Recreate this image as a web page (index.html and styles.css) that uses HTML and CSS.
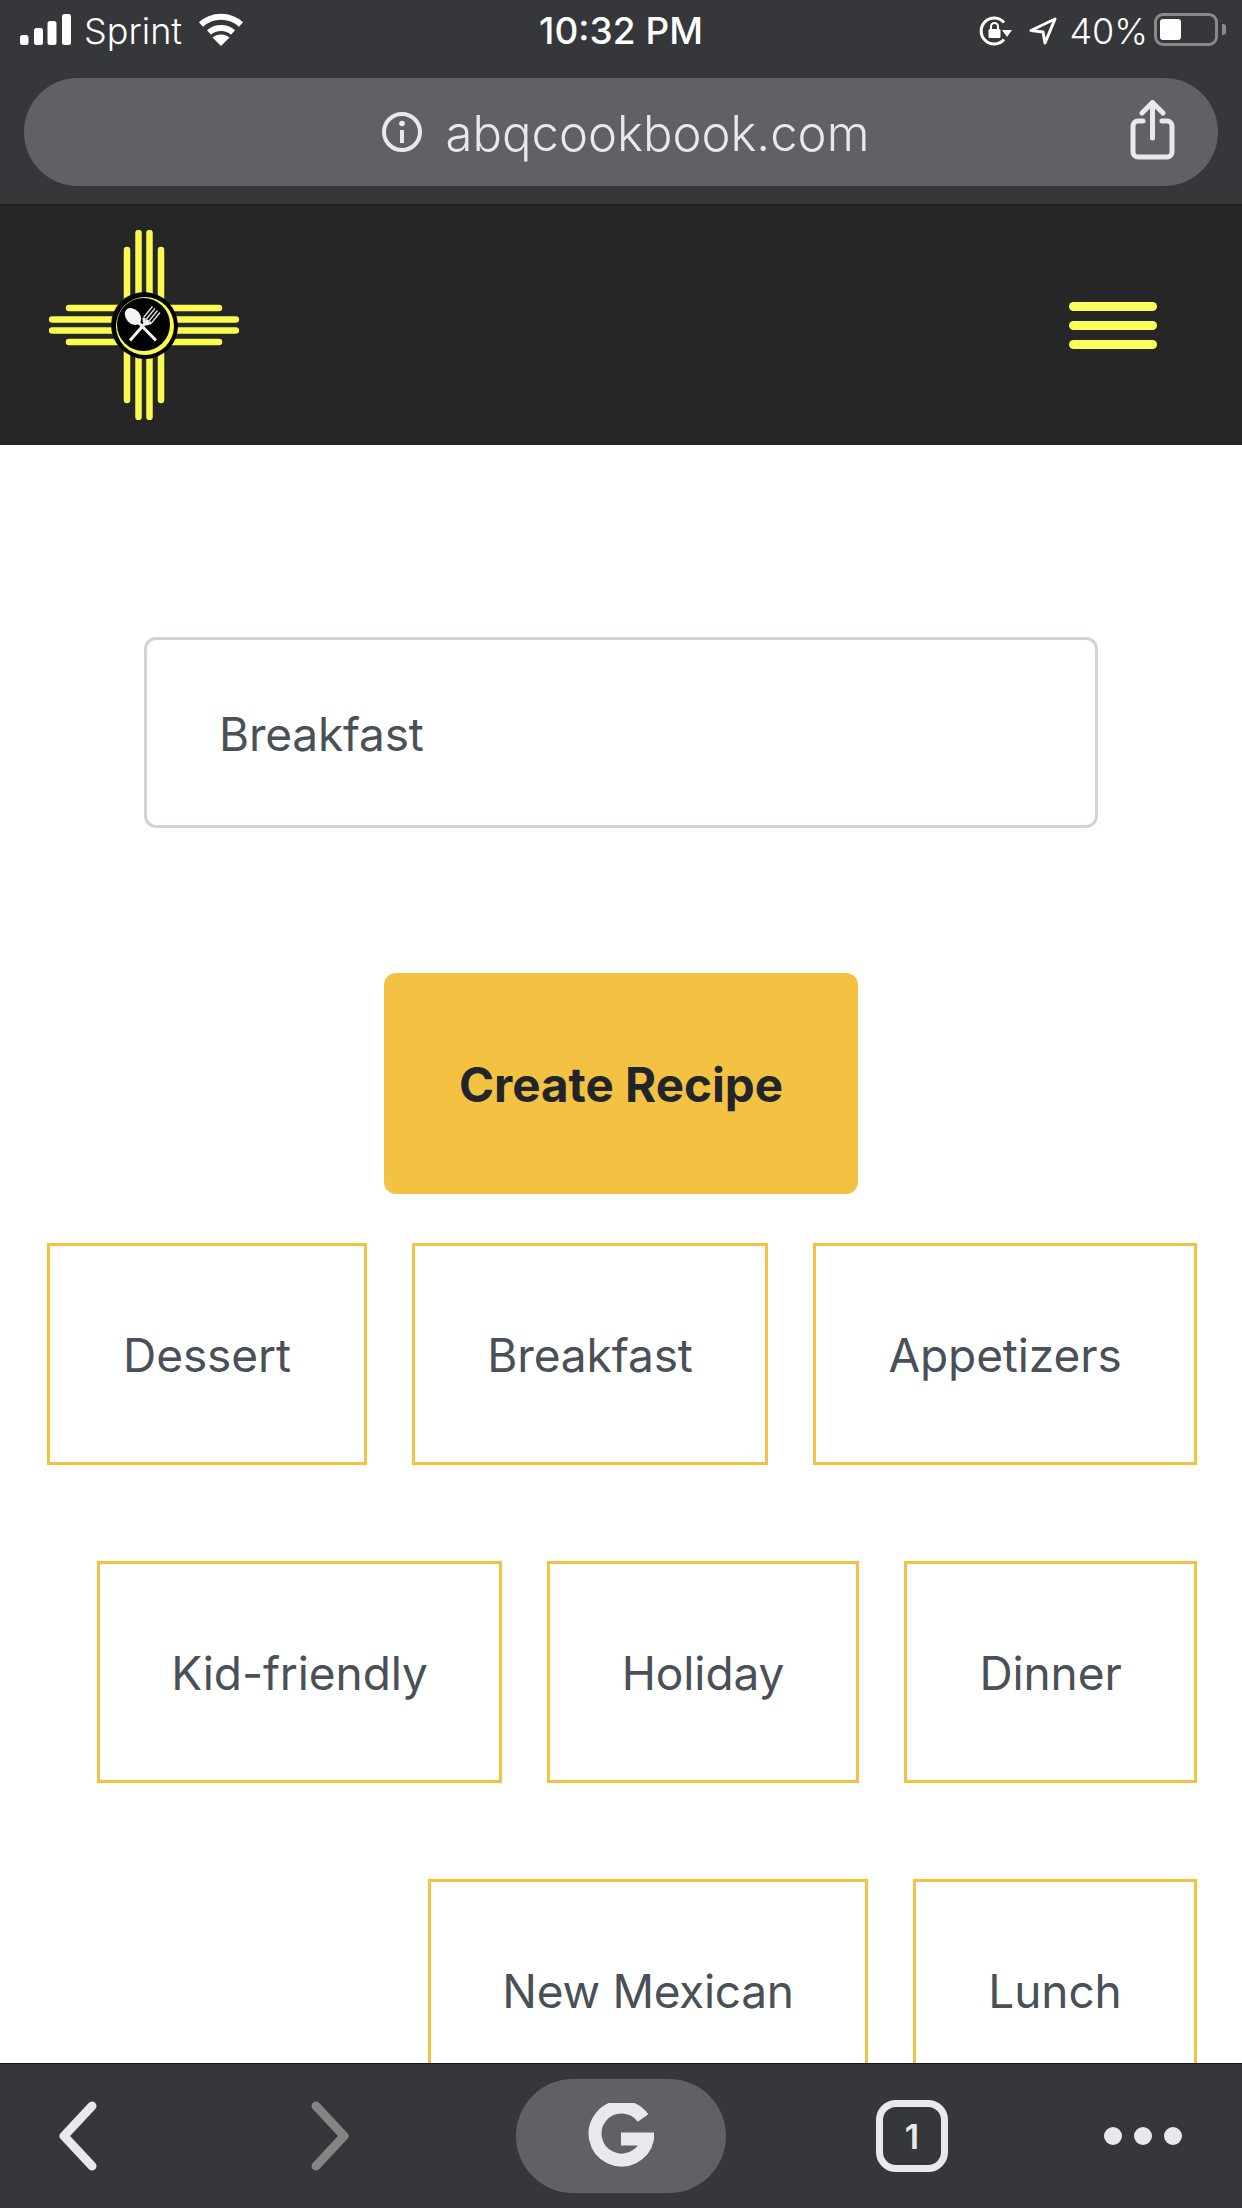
FILE: index.html
```html
<!DOCTYPE html>
<html lang="en">
<head>
<meta charset="utf-8">
<title>abqcookbook.com</title>
<link rel="stylesheet" href="styles.css">
</head>
<body>
<div class="phone">
  <div class="chrome-top">
    <div class="status">
      <div class="status-left">
        <svg class="signal" width="51" height="31" viewBox="0 0 51 31"><rect x="0" y="21" width="8.5" height="10" rx="2.5"/><rect x="14" y="14" width="9" height="17" rx="2.5"/><rect x="27.5" y="7" width="9" height="24" rx="2.5"/><rect x="42" y="0" width="9" height="31" rx="2.5"/></svg>
        <span class="carrier">Sprint</span>
        <svg class="wifi" width="46" height="33" viewBox="0 0 46 33"><path class="wifi-arc" d="M3 11.5C14 1 32 1 43 11.5"/><path class="wifi-arc" d="M11 19.5C17.500 13.500 28.500 13.500 35 19.500"/><path class="wifi-dot" d="M23 33L14.500 24.500C19 20.500 27 20.500 31.500 24.500Z"/></svg>
      </div>
      <div class="clock">10:32 PM</div>
      <div class="status-right">
        <svg class="rotation" width="33" height="30" viewBox="0 0 33 30"><path class="ln" d="M25 6.500A13 13 0 1 0 25 23.500"/><path class="fl" d="M23 14h10l-5 7z"/><rect class="fl" x="9.500" y="13" width="12" height="9" rx="1.500"/><path class="ln-thin" d="M12 13v-2.500a3.500 3.500 0 0 1 7 0V13"/></svg>
        <svg class="arrow" width="28" height="28" viewBox="0 0 28 28"><path class="ln" d="M26 2L2 13.500 14 15 16 26Z"/></svg>
        <span class="percent">40%</span>
        <div class="battery"><div class="battery-level"></div></div>
        <div class="battery-nub"></div>
      </div>
    </div>
    <div class="urlbar">
      <div class="url-spacer"></div>
      <div class="url-center">
        <svg width="40" height="40" viewBox="0 0 40 40"><circle class="url-ln" cx="20" cy="20" r="18"/><circle class="url-fl" cx="20" cy="11.500" r="2.800"/><path class="url-ln" d="M20 18v13"/></svg>
        <span class="url-text">abqcookbook.com</span>
      </div>
      <div class="url-share">
        <svg width="45" height="60" viewBox="0 0 45 60"><path class="url-ln share-ln" d="M13 21H8a5 5 0 0 0-5 5v26a5 5 0 0 0 5 5h29a5 5 0 0 0 5-5V26a5 5 0 0 0-5-5h-5"/><path class="url-ln share-ln" d="M22.500 38V3M12 13L22.500 2.500 33 13"/></svg>
      </div>
    </div>
  </div>

  <header class="site-header">
    <svg class="logo" width="190" height="190" viewBox="0 0 190 190">
      <g class="rays">
        <path d="M3 89.500H187M3 100.500H187M20 78H170M20 112H170"/>
        <path d="M89.500 3V187M100.500 3V187M78 20V170M112 20V170"/>
      </g>
      <circle class="disc-back" cx="95" cy="95" r="33"/>
      <circle class="disc-edge" cx="96" cy="96" r="33"/>
      <circle class="disc-ring" cx="96" cy="96" r="29"/>
      <circle class="disc" cx="94.500" cy="94.500" r="26.500"/>
      <path class="spoon-h" d="M87 90L107 110.500"/>
      <ellipse class="spoon" cx="84" cy="86.500" rx="7" ry="9.500" transform="rotate(-42 84 86.500)"/>
      <path class="spoon-h" d="M81 110.500L99 90"/>
      <path class="fork" d="M94.500 87.500L103.500 76.500M97 89.500L106 78.500M99.500 91.500L108.500 80.500M102 93.500L111 82.500"/>
      <path class="fork-base" d="M95 88C95 94 97 95 100 93L102 93"/>
    </svg>
    <div class="menu-btn"><span></span><span></span><span></span></div>
  </header>

  <main class="content">
    <div class="field"><input class="field-input" type="text" value="Breakfast"></div>
    <div class="action"><button class="create" type="button">Create Recipe</button></div>
    <div class="tags">
      <a class="tag tag-dessert">Dessert</a>
      <a class="tag tag-breakfast">Breakfast</a>
      <a class="tag tag-appetizers">Appetizers</a>
      <a class="tag tag-kid">Kid-friendly</a>
      <a class="tag tag-holiday">Holiday</a>
      <a class="tag tag-dinner">Dinner</a>
      <a class="tag tag-mexican">New Mexican</a>
      <a class="tag tag-lunch">Lunch</a>
    </div>
  </main>

  <footer class="toolbar">
    <svg width="38" height="70" viewBox="0 0 38 70"><path class="tool-ln" d="M33 5L5 35l28 30"/></svg>
    <svg width="38" height="70" viewBox="0 0 38 70"><path class="tool-ln tool-dim" d="M5 5l28 30L5 65"/></svg>
    <div class="g-pill">
      <svg width="66" height="66" viewBox="0 0 66 66"><path class="g-mark" d="M55 15A26.500 26.500 0 1 0 59.500 36H33"/></svg>
    </div>
    <div class="tabs-count">1</div>
    <div class="dots"><span></span><span></span><span></span></div>
  </footer>
</div>
</body>
</html>
```
FILE: styles.css
```css
* { box-sizing: border-box; }
html, body { margin: 0; padding: 0; background: #fff; }
body { font-family: Inter, "Open Sans", sans-serif; }

.phone {
  width: 1242px;
  height: 2208px;
  display: flex;
  flex-direction: column;
  overflow: hidden;
}

.chrome-top { height: 204px; background: #36373a; flex: none; }

.status {
  height: 78px;
  display: grid;
  grid-template-columns: 1fr auto 1fr;
  align-items: start;
  color: #fff;
  font-size: 36px;
  padding: 0 16px 0 20px;
}
.status-left { display: flex; align-items: flex-start; }
.signal { fill: #fff; margin-top: 14px; }
.carrier { margin: 9px 0 0 13px; font-weight: 300; line-height: 44px; width: 99px; }
.wifi { margin: 13px 0 0 15px; }
.wifi-arc { fill: none; stroke: #fff; stroke-width: 6; }
.wifi-dot { fill: #fff; }
.clock { margin: 9px 0 0 -4px; font-size: 37px; line-height: 44px; font-weight: 500; }
.status-right { display: flex; align-items: flex-start; justify-content: flex-end; }
.rotation { margin-top: 16px; }
.arrow { margin: 17px 0 0 17px; }
.ln { fill: none; stroke: #fff; stroke-width: 3; stroke-linejoin: round; }
.ln-thin { fill: none; stroke: #fff; stroke-width: 2; }
.fl { fill: #fff; }
.percent { margin: 9px 0 0 12px; line-height: 44px; font-weight: 300; }
.battery {
  width: 64px;
  height: 33px;
  margin: 13px 0 0 6px;
  border: 3px solid #88898b;
  border-radius: 9px;
  padding: 3px;
}
.battery-level { width: 21px; height: 21px; background: #fff; border-radius: 3px; }
.battery-nub { width: 4px; height: 11px; margin: 24px 0 0 4px; background: #88898b; border-radius: 0 3px 3px 0; }

.urlbar {
  height: 108px;
  margin: 0 24px;
  background: #5f6166;
  border-radius: 54px;
  display: grid;
  grid-template-columns: 1fr auto 1fr;
  align-items: center;
  color: #e8e9ec;
}
.url-center { display: flex; align-items: center; gap: 24px; padding-left: 9px; }
.url-text { font-size: 49px; font-weight: 300; line-height: 60px; padding-top: 3px; }
.url-share { display: flex; justify-content: flex-end; padding-right: 43px; }
.url-share svg { margin-top: -5px; }
.url-ln { fill: none; stroke: #e8e9ec; stroke-width: 4; }
.share-ln { stroke-width: 5; stroke-linecap: round; stroke-linejoin: round; }
.url-fl { fill: #e8e9ec; }

.site-header {
  height: 241px;
  flex: none;
  background: #262626;
  border-top: 1px solid #1e1e1f;
  display: flex;
  align-items: center;
  justify-content: space-between;
  padding: 0 85px 0 49px;
}
.rays path { fill: none; stroke: #fafa4f; stroke-width: 6.500; stroke-linecap: round; }
.disc-back { fill: #111; }
.disc-edge { fill: #000; }
.disc-ring { fill: #fafa4f; }
.disc { fill: #000; }
.spoon { fill: #f4f4f4; }
.spoon-h { fill: none; stroke: #f4f4f4; stroke-width: 3; }
.fork { fill: none; stroke: #e4e4e4; stroke-width: 1.300; }
.fork-base { fill: none; stroke: #f0f0f0; stroke-width: 3; }
.menu-btn { display: flex; flex-direction: column; gap: 10px; width: 88px; }
.menu-btn span { height: 9px; border-radius: 5px; background: #fbfd5c; }

.content { flex: 1; min-height: 0; overflow: hidden; background: #fff; padding-top: 192px; }
.field { padding: 0 144px; }
.field-input {
  display: block;
  width: 100%;
  height: 191px;
  border: 3px solid #ced4da;
  border-radius: 12px;
  padding: 2px 72px 0;
  background: #fff;
  font: 400 46px Inter, sans-serif;
  letter-spacing: -0.2px;
  color: #495057;
}
.action { margin-top: 145px; display: flex; justify-content: center; }
.create {
  width: 474px;
  height: 221px;
  border: 0;
  border-radius: 12px;
  padding: 2px 0 0;
  background: #f4c242;
  color: #212529;
  font: 700 47.500px Inter, sans-serif;
}
.tags {
  margin-top: 49px;
  padding: 0 45px 0 20px;
  display: flex;
  flex-wrap: wrap;
  justify-content: flex-end;
  gap: 96px 45px;
}
.tag {
  height: 222px;
  display: flex;
  align-items: center;
  justify-content: center;
  padding-top: 2px;
  border: 3px solid #f4c242;
  font-size: 46px;
  letter-spacing: -0.1px;
  color: #495057;
}
.tag-dessert { width: 320px; }
.tag-breakfast { width: 356px; }
.tag-appetizers { width: 384px; }
.tag-kid { width: 405px; }
.tag-holiday { width: 312px; }
.tag-dinner { width: 293px; }
.tag-mexican { width: 440px; letter-spacing: -0.3px; }
.tag-lunch { width: 284px; }

.toolbar {
  height: 145px;
  flex: none;
  background: #36373a;
  border-top: 1px solid #17181a;
  display: grid;
  grid-template-columns: 252px 205px 360px 228px 78px;
  justify-items: start;
  align-items: center;
  padding-left: 59px;
}
.tool-ln { fill: none; stroke: #e8e9ec; stroke-width: 9; stroke-linecap: round; stroke-linejoin: round; }
.tool-dim { stroke: #838486; }
.g-pill {
  width: 210px;
  height: 114px;
  border-radius: 57px;
  background: #5f6166;
  display: flex;
  align-items: center;
  justify-content: center;
}
.g-mark { fill: none; stroke: #e8e9ec; stroke-width: 13; }
.tabs-count {
  width: 72px;
  height: 72px;
  border: 7px solid #e8e9ec;
  border-radius: 20px;
  display: flex;
  align-items: center;
  justify-content: center;
  font-size: 34px;
  font-weight: 600;
  color: #e8e9ec;
}
.dots { display: flex; gap: 12px; }
.dots span { width: 18px; height: 18px; border-radius: 50%; background: #e8e9ec; }
```
